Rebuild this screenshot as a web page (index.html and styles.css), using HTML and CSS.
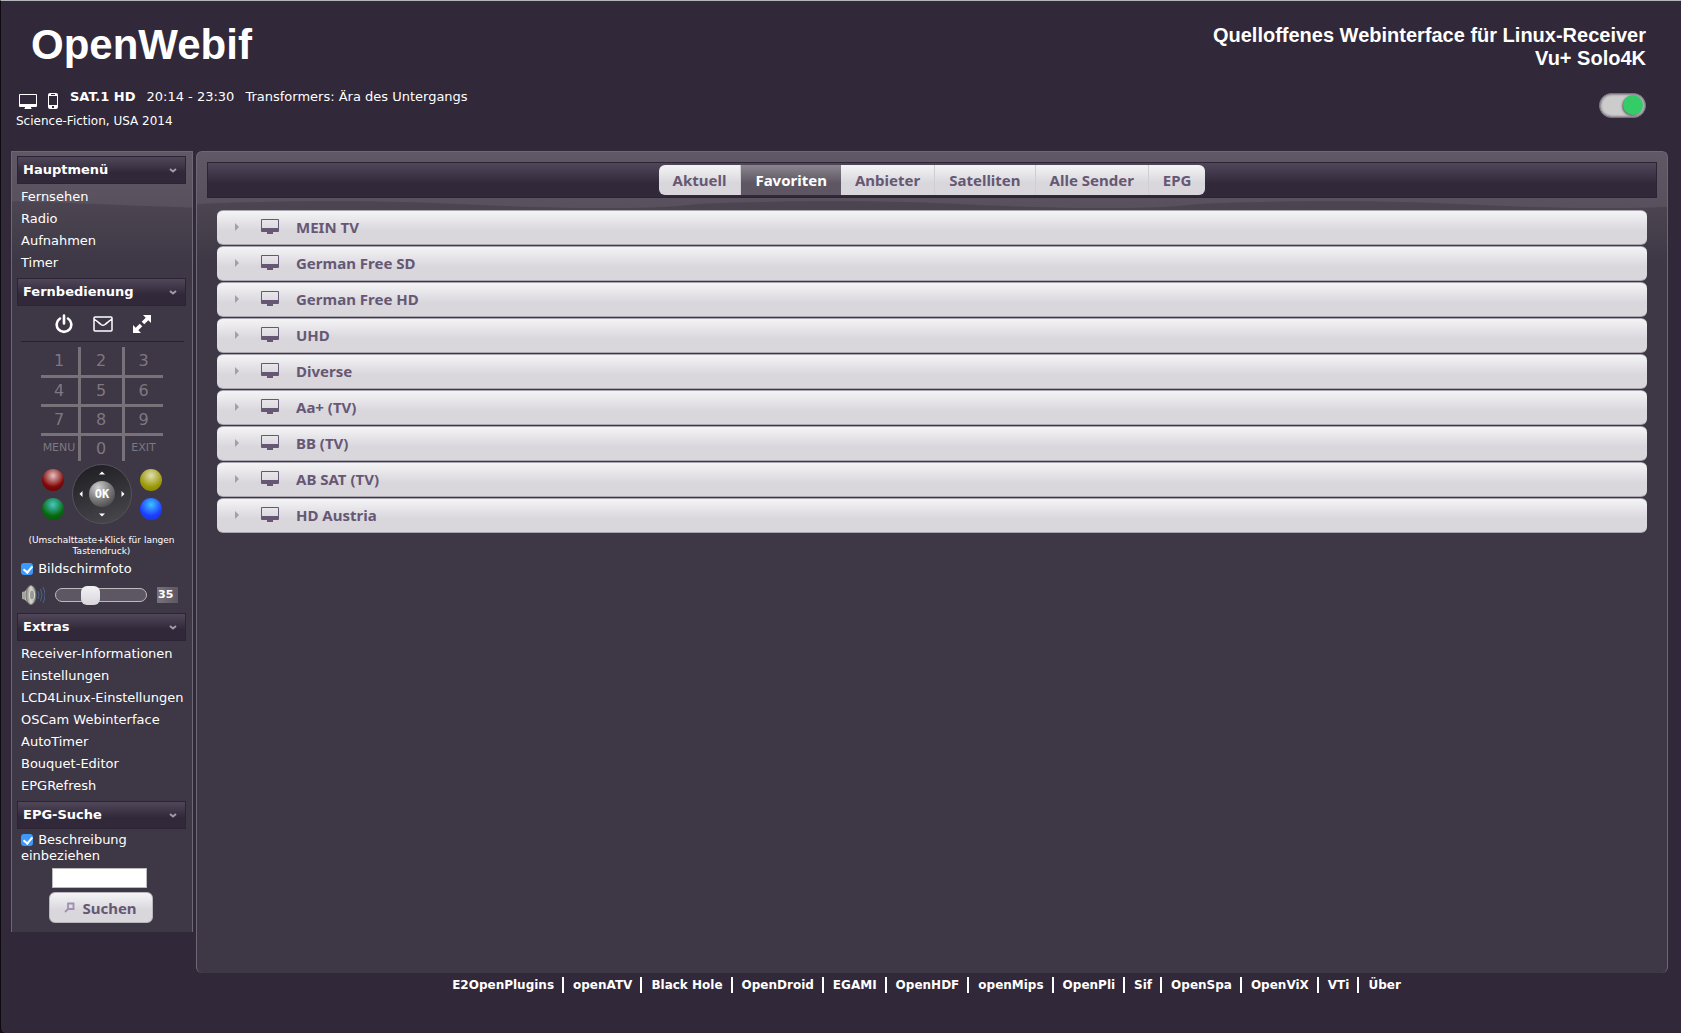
FILE: index.html
```html
<!DOCTYPE html>
<html lang="de">
<head>
<meta charset="utf-8">
<title>OpenWebif</title>
<link rel="stylesheet" href="styles.css">
</head>
<body>
<svg class="defs" aria-hidden="true">
  <symbol id="screen" viewBox="0 0 18 15"><path fill="currentColor" fill-rule="evenodd" d="M1 0h16a1 1 0 0 1 1 1v11a1 1 0 0 1-1 1h-5v2H6v-2H1a1 1 0 0 1-1-1V1a1 1 0 0 1 1-1zm0 1v8h16V1z"/></symbol>
  <symbol id="chevron" viewBox="0 0 8 5"><path fill="none" stroke="currentColor" stroke-width="2" d="M1 1l3 2.500 3-2.500"/></symbol>
  <symbol id="tri" viewBox="0 0 4 8"><path fill="currentColor" d="M0 0l4 4-4 4z"/></symbol>
</svg>

<header class="header">
  <div class="brand">
    <h1 class="logo">OpenWebif</h1>
    <p class="tagline">Quelloffenes Webinterface für Linux-Receiver<br>Vu+ Solo4K</p>
  </div>
  <div class="status">
    <div class="now">
      <p class="now-line">
        <a class="stream" href="#" aria-label="Stream"><svg width="18" height="16" viewBox="0 0 18 16"><path fill="currentColor" fill-rule="evenodd" d="M1 0h16a1 1 0 0 1 1 1v11a1 1 0 0 1-1 1h-5v1l1 1H5l1-1v-1H1a1 1 0 0 1-1-1V1a1 1 0 0 1 1-1zm0 1v9h16V1z"/></svg></a>
        <a class="mobile" href="#" aria-label="Mobil"><svg width="10" height="16" viewBox="0 0 10 16"><path fill="currentColor" fill-rule="evenodd" d="M2 0h6a2 2 0 0 1 2 2v12a2 2 0 0 1-2 2H2a2 2 0 0 1-2-2V2a2 2 0 0 1 2-2zM1 3v9h8V3zm3 10v2h2v-2zM3 1v1h4V1z"/></svg></a>
        <b class="channel">SAT.1 HD</b>
        <span>20:14 - 23:30</span>
        <span>Transformers: Ära des Untergangs</span>
      </p>
      <p class="genre">Science-Fiction, USA 2014</p>
    </div>
    <input class="switch" type="checkbox" checked aria-label="Standby">
  </div>
</header>

<div class="layout">
  <aside class="sidebar">
    <h2 class="bar">Hauptmenü <svg width="8" height="5"><use href="#chevron"/></svg></h2>
    <ul class="menu">
      <li><a href="#">Fernsehen</a></li>
      <li><a href="#">Radio</a></li>
      <li><a href="#">Aufnahmen</a></li>
      <li><a href="#">Timer</a></li>
    </ul>

    <h2 class="bar">Fernbedienung <svg width="8" height="5"><use href="#chevron"/></svg></h2>
    <div class="actions">
      <button type="button" aria-label="Power"><svg width="18" height="20" viewBox="0 0 18 20"><path d="M5 4.500a7.300 7.300 0 1 0 8 0M9 1.500v8" fill="none" stroke="currentColor" stroke-width="2.600" stroke-linecap="round"/></svg></button>
      <button type="button" aria-label="Nachricht"><svg width="20" height="16" viewBox="0 0 20 16"><path d="M2 1h16a1 1 0 0 1 1 1v12a1 1 0 0 1-1 1H2a1 1 0 0 1-1-1V2a1 1 0 0 1 1-1zM1 3c3 2 5 4 7 5.500q2 1.400 4 0C14 7 16 5 19 3" fill="none" stroke="currentColor" stroke-width="1.500"/></svg></button>
      <button type="button" aria-label="Vergrößern"><svg width="18" height="18" viewBox="0 0 18 18"><path d="M10 0h8v8l-2.700-2.700-4 4-2.600-2.600 4-4zM0 10l2.700 2.700 4-4 2.600 2.600-4 4L8 18H0z" fill="currentColor"/></svg></button>
    </div>
    <div class="keypad">
      <button type="button">1</button><button type="button">2</button><button type="button">3</button>
      <button type="button">4</button><button type="button">5</button><button type="button">6</button>
      <button type="button">7</button><button type="button">8</button><button type="button">9</button>
      <button type="button" class="word">MENU</button><button type="button">0</button><button type="button" class="word">EXIT</button>
    </div>
    <div class="nav">
      <div class="balls">
        <button type="button" class="ball red" aria-label="Rot"></button>
        <button type="button" class="ball green" aria-label="Grün"></button>
      </div>
      <div class="dpad">
        <button type="button" class="up" aria-label="Hoch"><svg width="4" height="6"><use href="#tri"/></svg></button>
        <button type="button" class="left" aria-label="Links"><svg width="4" height="6"><use href="#tri"/></svg></button>
        <button type="button" class="ok">OK</button>
        <button type="button" class="right" aria-label="Rechts"><svg width="4" height="6"><use href="#tri"/></svg></button>
        <button type="button" class="down" aria-label="Runter"><svg width="4" height="6"><use href="#tri"/></svg></button>
      </div>
      <div class="balls">
        <button type="button" class="ball yellow" aria-label="Gelb"></button>
        <button type="button" class="ball blue" aria-label="Blau"></button>
      </div>
    </div>
    <p class="hint">(Umschalttaste+Klick für langen Tastendruck)</p>
    <label class="check"><input type="checkbox" checked> Bildschirmfoto</label>
    <div class="volume">
      <svg width="24" height="20" viewBox="0 0 24 20">
        <defs><linearGradient id="cone"><stop offset="0" stop-color="#8b8b86"/><stop offset=".5" stop-color="#d8d8d2"/><stop offset="1" stop-color="#85857f"/></linearGradient></defs>
        <path d="M1 7l4-1v9l-4-1z" fill="#a5a5a0"/><path d="M4 6l6-6v20l-6-5z" fill="#c9c9c3"/>
        <ellipse cx="10" cy="10" rx="5" ry="9.500" fill="url(#cone)" stroke="#777772"/>
        <ellipse cx="11" cy="10" rx="2.500" ry="5" fill="#999994" stroke="#dcdcd6"/>
        <path d="M17 6q2 4 0 8M19.500 4q3 6 0 12M22 2q4 8 0 16" fill="none" stroke="#4c6488"/>
      </svg>
      <input class="slider" type="range" min="0" max="100" value="35" aria-label="Lautstärke">
      <output class="level">35</output>
    </div>

    <h2 class="bar">Extras <svg width="8" height="5"><use href="#chevron"/></svg></h2>
    <ul class="menu">
      <li><a href="#">Receiver-Informationen</a></li>
      <li><a href="#">Einstellungen</a></li>
      <li><a href="#">LCD4Linux-Einstellungen</a></li>
      <li><a href="#">OSCam Webinterface</a></li>
      <li><a href="#">AutoTimer</a></li>
      <li><a href="#">Bouquet-Editor</a></li>
      <li><a href="#">EPGRefresh</a></li>
    </ul>

    <h2 class="bar">EPG-Suche <svg width="8" height="5"><use href="#chevron"/></svg></h2>
    <form class="search">
      <label class="check"><input type="checkbox" checked> Beschreibung einbeziehen</label>
      <input class="query" type="text" aria-label="Suchbegriff">
      <button class="submit" type="button"><svg width="11" height="11" viewBox="0 0 11 11"><path d="M4 1.500h5.500V7H4zM4 7l-3 3" fill="none" stroke="#a18fb2" stroke-width="1.800"/></svg>Suchen</button>
    </form>
  </aside>

  <main class="content">
    <nav class="toolbar">
      <div class="tabs">
        <button type="button">Aktuell</button>
        <button type="button" class="active">Favoriten</button>
        <button type="button">Anbieter</button>
        <button type="button">Satelliten</button>
        <button type="button">Alle Sender</button>
        <button type="button">EPG</button>
      </div>
    </nav>
    <div class="bouquets">
      <button type="button"><svg class="arrow" width="4" height="8"><use href="#tri"/></svg><svg width="18" height="15"><use href="#screen"/></svg>MEIN TV</button>
      <button type="button"><svg class="arrow" width="4" height="8"><use href="#tri"/></svg><svg width="18" height="15"><use href="#screen"/></svg>German Free SD</button>
      <button type="button"><svg class="arrow" width="4" height="8"><use href="#tri"/></svg><svg width="18" height="15"><use href="#screen"/></svg>German Free HD</button>
      <button type="button"><svg class="arrow" width="4" height="8"><use href="#tri"/></svg><svg width="18" height="15"><use href="#screen"/></svg>UHD</button>
      <button type="button"><svg class="arrow" width="4" height="8"><use href="#tri"/></svg><svg width="18" height="15"><use href="#screen"/></svg>Diverse</button>
      <button type="button"><svg class="arrow" width="4" height="8"><use href="#tri"/></svg><svg width="18" height="15"><use href="#screen"/></svg>Aa+ (TV)</button>
      <button type="button"><svg class="arrow" width="4" height="8"><use href="#tri"/></svg><svg width="18" height="15"><use href="#screen"/></svg>BB (TV)</button>
      <button type="button"><svg class="arrow" width="4" height="8"><use href="#tri"/></svg><svg width="18" height="15"><use href="#screen"/></svg>AB SAT (TV)</button>
      <button type="button"><svg class="arrow" width="4" height="8"><use href="#tri"/></svg><svg width="18" height="15"><use href="#screen"/></svg>HD Austria</button>
    </div>
  </main>
</div>

<footer class="footer">
  <ul class="links">
    <li><a href="#">E2OpenPlugins</a></li>
    <li><a href="#">openATV</a></li>
    <li><a href="#">Black Hole</a></li>
    <li><a href="#">OpenDroid</a></li>
    <li><a href="#">EGAMI</a></li>
    <li><a href="#">OpenHDF</a></li>
    <li><a href="#">openMips</a></li>
    <li><a href="#">OpenPli</a></li>
    <li><a href="#">Sif</a></li>
    <li><a href="#">OpenSpa</a></li>
    <li><a href="#">OpenViX</a></li>
    <li><a href="#">VTi</a></li>
    <li><a href="#">Über</a></li>
  </ul>
</footer>
</body>
</html>
```

FILE: styles.css
```css
* { box-sizing: border-box; }

html { background: #17111c; }

body {
  margin: 0;
  min-height: 100vh;
  display: flex;
  flex-direction: column;
  border-top: 1px solid #b4b6bb;
  border-left: 1px solid #0d0a10;
  border-radius: 0 0 0 5px;
  background: #31283a;
  color: #fff;
  font: 13px/16px "DejaVu Sans", Verdana, sans-serif;
}

h1, h2, p, ul { margin: 0; padding: 0; }
ul { list-style: none; }
a { color: inherit; text-decoration: none; }
button { margin: 0; padding: 0; border: 0; background: none; color: inherit; font: inherit; cursor: pointer; }
svg { display: block; flex: none; }
.defs { position: absolute; width: 0; height: 0; }

.header { padding: 20px 35px 0 15px; height: 150px; }
.brand {
  display: flex;
  justify-content: space-between;
  padding-left: 15px;
  font-family: "Liberation Sans", Arial, sans-serif;
  font-weight: bold;
}
.logo { font-size: 42px; line-height: 48px; }
.tagline { padding-top: 3px; font-size: 20px; line-height: 23px; text-align: right; }
.status { display: flex; justify-content: space-between; padding-top: 16px; }
.now-line { display: flex; gap: 11px; line-height: 22px; }
.stream { padding: 8px 0 0 3px; }
.mobile { padding: 7px 1px 0 0; }
.genre { padding-top: 3px; font-size: 12px; line-height: 16px; }
.switch {
  appearance: none;
  width: 47px;
  height: 25px;
  margin: 7px 0 0;
  padding: 1px 2px;
  border: 1px solid #77727c;
  border-radius: 13px;
  background: #ccc;
  box-shadow: inset 0 0 2px 1px #8a868e;
}
.switch::after {
  content: "";
  display: block;
  width: 20px;
  height: 20px;
  margin-left: auto;
  border-radius: 50%;
  background: #33cc66;
  box-shadow: -1px 1px 2px #666;
}

.layout { flex: 1; display: flex; gap: 3px; padding: 0 13px 0 10px; }
.sidebar, .content {
  border: 1px solid #6e6775;
  background-color: #3e3745;
  background-repeat: repeat-x;
  background-image: url("data:image/svg+xml,%3Csvg xmlns='http://www.w3.org/2000/svg' width='500' height='110'%3E%3Cdefs%3E%3ClinearGradient id='a' x2='0' y2='1'%3E%3Cstop offset='.4' stop-color='%234e4753'/%3E%3Cstop offset='1' stop-color='%233e3745'/%3E%3C/linearGradient%3E%3ClinearGradient id='b' x2='0' y2='1'%3E%3Cstop stop-color='%23605965'/%3E%3Cstop offset='1' stop-color='%2358515d'/%3E%3C/linearGradient%3E%3C/defs%3E%3Cpath fill='url(%23a)' d='M0 0h500v110H0z'/%3E%3Cpath fill='url(%23b)' d='M0 0H500V52C470 56 440 56 400 56C310 56 240 49 140 49C70 49 30 51 0 52z'/%3E%3C/svg%3E");
}
.sidebar {
  flex: none;
  align-self: flex-start;
  width: 182px;
  padding: 4px 6px 9px 5px;
  border-bottom: 0;
  background-position: -180px 0;
}
.content { flex: 1; min-width: 0; padding: 10px; border-bottom: 0; border-radius: 6px; }

.bar, .toolbar {
  border: 1px solid #2c2334;
  background: linear-gradient(#50475a, #31283a 60%, #31283a);
}
.bar {
  display: flex;
  align-items: center;
  justify-content: space-between;
  height: 28px;
  padding: 0 8px 0 5px;
  font-size: 13px;
}
.bar svg { color: #a19ca6; }
.menu { padding: 2px 0 4px 4px; }
.menu a { display: block; line-height: 22px; white-space: nowrap; }

.actions {
  display: flex;
  align-items: center;
  justify-content: center;
  gap: 20px;
  height: 36px;
  margin: 0 2px 0 4px;
  border-bottom: 1px solid #292130;
}
.keypad {
  display: grid;
  grid-template: 31px 29px 29px 25px / 40px 44px 38px;
  justify-content: center;
  margin: 5px 0 3px;
  color: #7d7881;
  font-size: 16px;
}
.keypad button { border: 0 solid #77727a; border-width: 0 3px 3px 0; }
.keypad button:nth-child(3n) { border-right: 0; }
.keypad button:nth-child(n + 10) { border-bottom: 0; }
.keypad .word { padding-bottom: 1px; font-size: 11px; }

.nav { display: flex; justify-content: center; gap: 8px; padding-left: 1px; }
.balls { display: grid; gap: 7px; align-content: center; }
.ball { width: 22px; height: 22px; border-radius: 50%; }
.red { background: radial-gradient(circle at 50% 30%, #e4c0c0, #800808 60%, #600); }
.green { background: radial-gradient(circle at 50% 30%, #46c8c8, #08680e 60%, #045204); }
.yellow { background: radial-gradient(circle at 50% 30%, #e0deb4, #9c9a08 60%, #7e7c00); }
.blue { background: radial-gradient(circle at 50% 30%, #3cc4ff, #1e3cff 60%, #1830e0); }
.dpad {
  display: grid;
  grid-template: 16px 26px 16px / 16px 26px 16px;
  grid-template-areas: ". up ." "left ok right" ". down .";
  width: 60px;
  height: 60px;
  border: 1px solid #55515a;
  border-radius: 50%;
  background: linear-gradient(160deg, #1c1c20, #4b4a4e);
}
.dpad button { display: flex; align-items: center; justify-content: center; }
.up { grid-area: up; }
.up svg { transform: rotate(-90deg); }
.left { grid-area: left; }
.left svg { transform: rotate(180deg); }
.right { grid-area: right; }
.down { grid-area: down; }
.down svg { transform: rotate(90deg); }
.dpad .ok {
  grid-area: ok;
  border-radius: 50%;
  background: radial-gradient(circle at 35% 25%, #d0d0d0, #777 50%, #333);
  font: bold 12px/16px "DejaVu Sans Mono", monospace;
}

.hint { padding: 11px 0 4px; font-size: 9px; line-height: 11px; text-align: center; }
.check { display: block; padding-left: 4px; line-height: 16px; }
.check input {
  appearance: none;
  width: 12px;
  height: 12px;
  margin: 0 1px 0 0;
  border-radius: 3px;
  background: #3b99fc;
  vertical-align: -2px;
}
.check input::after {
  content: "";
  display: block;
  width: 4px;
  height: 7px;
  margin: 1px 0 0 4px;
  border: solid #fff;
  border-width: 0 2px 2px 0;
  transform: rotate(40deg);
}
.volume { display: flex; align-items: center; gap: 10px; padding: 8px 0 8px 4px; }
.slider {
  appearance: none;
  width: 92px;
  height: 14px;
  margin: 0;
  border: 1px solid #bcb9bf;
  border-radius: 7px;
  background: #5d5763;
}
.slider::-webkit-slider-thumb {
  appearance: none;
  width: 19px;
  height: 19px;
  border-radius: 6px;
  background: linear-gradient(#f2f1f4, #d8d6db);
}
.level { padding: 0 5px 0 1px; background: linear-gradient(90deg, #77727c, #5d5763); font-size: 11px; font-weight: bold; }

.search { display: flex; flex-direction: column; align-items: center; }
.search .check { align-self: stretch; padding-top: 3px; }
.query { width: 95px; height: 20px; margin: 4px 4px 4px 0; border: 1px solid #bbb; background: #fff; }
.submit {
  display: flex;
  align-items: center;
  justify-content: center;
  gap: 7px;
  width: 104px;
  height: 31px;
  border: 1px solid #b9b6bd;
  border-radius: 6px;
  margin-right: 2px;
}
.submit, .tabs button, .bouquets button {
  background: linear-gradient(#f4f3f5, #d9d7dc 60%, #d9d7dc);
  color: #665874;
  font: bold 15px/20px "Noto Sans", "Open Sans", sans-serif;
}

.toolbar { display: flex; justify-content: center; height: 36px; padding-top: 2px; }
.tabs { display: flex; height: 30px; border-radius: 6px; overflow: hidden; }
.tabs button { padding: 0 14px; border-right: 1px solid #d0cdd4; }
.tabs button:last-child, .tabs button.active { border-right: 0; }
.tabs .active { background: linear-gradient(#8a858d, #5e5763 60%, #5e5763); color: #fff; }

.bouquets { display: grid; gap: 1px; padding: 12px 10px; }
.bouquets button {
  display: flex;
  align-items: center;
  height: 35px;
  padding: 0 18px 2px;
  border: solid #aaa6b0;
  border-width: 1px 0;
  border-radius: 6px;
}
.bouquets svg { margin-right: 17px; }
.bouquets .arrow { margin-right: 22px; color: #a29fa7; }

.footer { height: 60px; padding-top: 4px; }
.links { display: flex; justify-content: center; padding-left: 171px; font-size: 12px; font-weight: bold; }
.links li + li { margin-left: 8px; padding-left: 9px; border-left: 2px solid #fff; }
```
